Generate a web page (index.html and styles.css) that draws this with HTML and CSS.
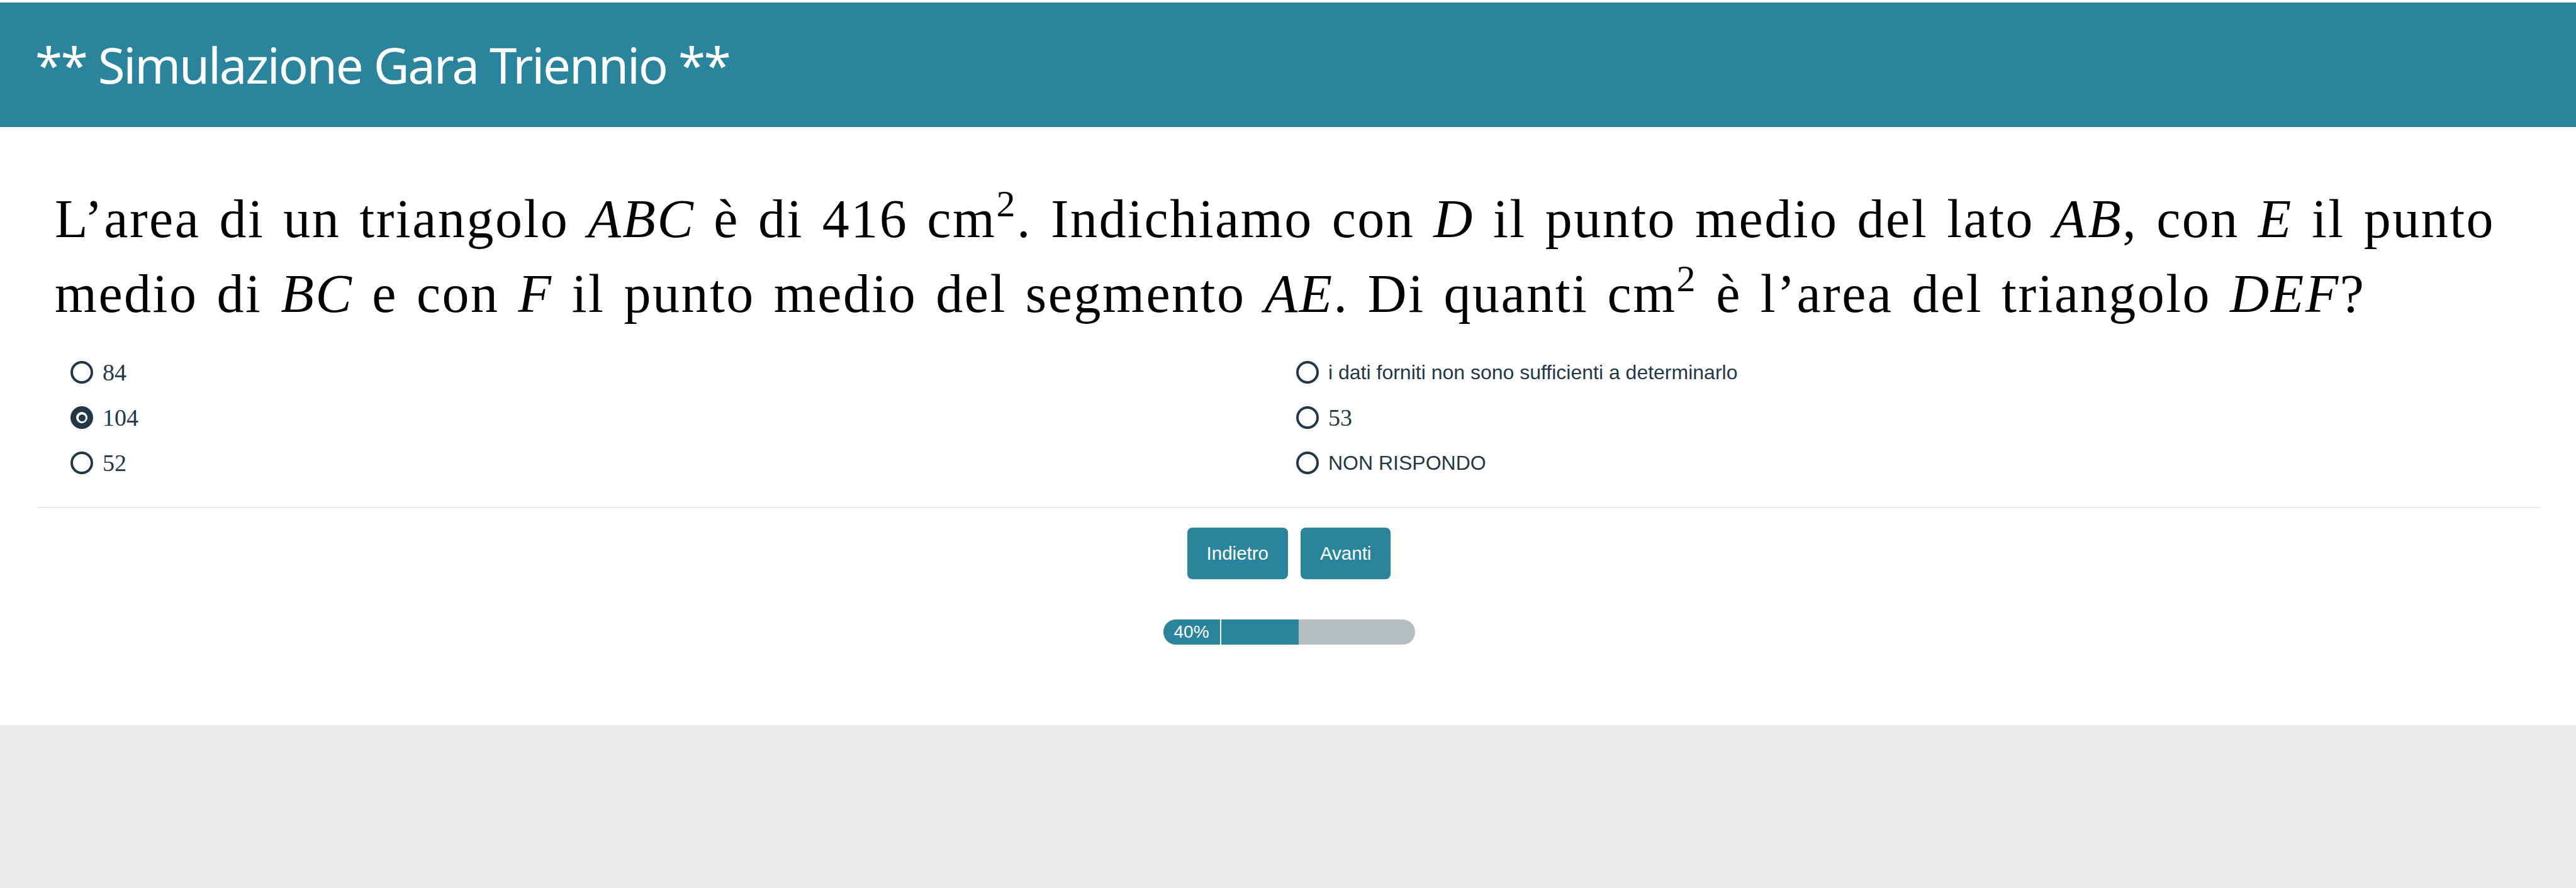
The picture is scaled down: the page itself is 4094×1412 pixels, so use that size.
FILE: index.html
```html
<!DOCTYPE html>
<html lang="it">
<head>
<meta charset="utf-8">
<title>Simulazione Gara Triennio</title>
<link rel="stylesheet" href="styles.css">
</head>
<body>
<div class="page">
  <header class="topbar">
    <h1 class="title">** Simulazione Gara Triennio **</h1>
  </header>
  <main class="card">
    <p class="question">L’area di un triangolo <i>ABC</i> è di 416 cm<sup>2</sup>. Indichiamo con <i>D</i> il punto medio del lato <i>AB</i>, con <i>E</i> il punto medio di <i>BC</i> e con <i>F</i> il punto medio del segmento <i>AE</i>. Di quanti cm<sup>2</sup> è l’area del triangolo <i>DEF</i>?</p>
    <div class="options">
      <label class="opt"><span class="radio"></span><span class="math">84</span></label>
      <label class="opt"><span class="radio checked"></span><span class="math">104</span></label>
      <label class="opt"><span class="radio"></span><span class="math">52</span></label>
      <label class="opt"><span class="radio"></span><span class="plain">i dati forniti non sono sufficienti a determinarlo</span></label>
      <label class="opt"><span class="radio"></span><span class="math">53</span></label>
      <label class="opt"><span class="radio"></span><span class="plain">NON RISPONDO</span></label>
    </div>
    <hr class="sep">
    <div class="nav">
      <button class="btn">Indietro</button>
      <button class="btn">Avanti</button>
    </div>
    <div class="progress">
      <span class="progress-label">40%</span>
      <span class="progress-track"><span class="progress-fill" style="width:40%"></span></span>
    </div>
  </main>
</div>
</body>
</html>
```

FILE: styles.css
```css
html, body {
  margin: 0;
  padding: 0;
}
body {
  background: #ebebeb;
  font-family: "Liberation Sans", Arial, sans-serif;
  color: #233746;
}
.page {
  background: #ffffff;
  padding-top: 4px;
}
.topbar {
  background: #29849c;
  height: 198px;
  display: flex;
  align-items: center;
  padding-left: 56px;
}
.title {
  margin: 0;
  color: #ffffff;
  font-family: "Noto Sans", "Open Sans", sans-serif;
  font-weight: 400;
  font-size: 78px;
  line-height: 1;
  letter-spacing: -2.2px;
}
.card {
  padding: 0 57px 128px 60px;
}
.question {
  margin: 87px -40px 0 0;
  padding-left: 27px;
  font-family: "Liberation Serif", "Times New Roman", serif;
  font-size: 86px;
  line-height: 119px;
  color: #000;
  letter-spacing: 2.5px;
  word-spacing: 6px;
}
.question i {
  font-style: italic;
}
.question sup {
  font-size: 0.7em;
  line-height: 0;
  vertical-align: 0.55em;
}
.options {
  margin-top: 29px;
  padding-left: 52px;
  display: grid;
  grid-template-rows: repeat(3, 72px);
  grid-auto-flow: column;
  grid-template-columns: 1948px 1fr;
}
.opt {
  display: flex;
  align-items: center;
  gap: 15px;
}
.radio {
  box-sizing: border-box;
  width: 36px;
  height: 36px;
  border: 4px solid #233746;
  border-radius: 50%;
  display: flex;
  align-items: center;
  justify-content: center;
  flex: none;
}
.radio.checked {
  border-width: 9px;
}
.radio.checked::after {
  content: "";
  width: 11px;
  height: 11px;
  border-radius: 50%;
  background: #233746;
}
.math {
  font-family: "Liberation Serif", "Times New Roman", serif;
  font-size: 38px;
  color: #233746;
}
.plain {
  font-family: "Liberation Sans", Arial, sans-serif;
  font-size: 32px;
  color: #233746;
}
.sep {
  margin: 34px 0 0 0;
  border: none;
  height: 2px;
  background: #e6e8eb;
}
.nav {
  margin-top: 31px;
  display: flex;
  justify-content: center;
  gap: 20px;
}
.btn {
  height: 82px;
  padding: 0 31px;
  border: none;
  border-radius: 8px;
  background: #29849c;
  color: #ffffff;
  font-family: "Liberation Sans", Arial, sans-serif;
  font-size: 29.5px;
}
.progress {
  margin: 64px auto 0 auto;
  width: 400px;
  height: 40px;
  border-radius: 20px;
  overflow: hidden;
  display: flex;
  background: #b6bec1;
}
.progress-label {
  box-sizing: border-box;
  width: 92px;
  flex: none;
  background: #29849c;
  border-right: 2px solid #ffffff;
  color: #ffffff;
  font-family: "Liberation Sans", Arial, sans-serif;
  font-size: 28px;
  line-height: 40px;
  padding-left: 17px;
}
.progress-track {
  flex: 1;
  display: flex;
}
.progress-fill {
  background: #29849c;
  height: 100%;
}
```
